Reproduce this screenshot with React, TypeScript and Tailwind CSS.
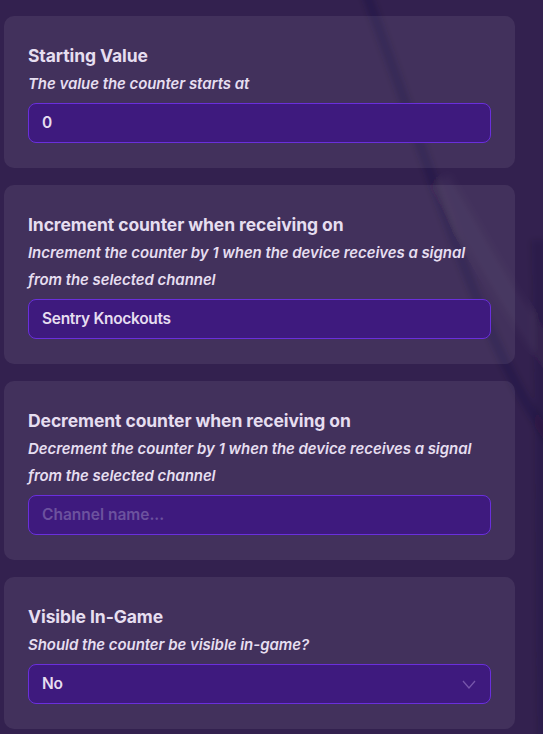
import React from 'react';

interface Field {
    title: string;
    description: string;
    value?: string;
    placeholder?: string;
    select?: boolean;
}

const fields: Field[] = [
    { title: 'Starting Value', description: 'The value the counter starts at', value: '0' },
    {
        title: 'Increment counter when receiving on',
        description: 'Increment the counter by 1 when the device receives a signal from the selected channel',
        value: 'Sentry Knockouts',
    },
    {
        title: 'Decrement counter when receiving on',
        description: 'Decrement the counter by 1 when the device receives a signal from the selected channel',
        placeholder: 'Channel name...',
    },
    { title: 'Visible In-Game', description: 'Should the counter be visible in-game?', value: 'No', select: true },
];

function FieldCard({ field }: { field: Field }) {
    return (
        <div className="rounded-[10px] bg-white/[0.075] pl-[24px] pr-[24px] pt-[26px] pb-[25px]">
            <div className="text-[17.5px] leading-[28px] font-bold tracking-[-0.005em] text-[#e6def0]">{field.title}</div>
            <div className="text-[15px] leading-[27px] italic font-semibold tracking-[-0.004em] text-[#e6def0] pr-[10px]">
                {field.description}
            </div>
            <div className="mt-[6px] h-[40px] rounded-[8px] border border-[#6a2fdc] bg-[#3e1a7e] flex items-center justify-between pl-[13px] pr-[14px]">
                {field.value ? (
                    <span className="text-[15.5px] font-semibold tracking-[-0.02em] text-[#e6def0]">{field.value}</span>
                ) : (
                    <span className="text-[15.5px] font-semibold text-[#6c529e]">{field.placeholder}</span>
                )}
                {field.select && (
                    <svg width="14" height="9" viewBox="0 0 14 9" fill="none">
                        <polyline points="1,1 7,8 13,1" stroke="#7656aa" strokeWidth="1.3" />
                    </svg>
                )}
            </div>
        </div>
    );
}

export default function App() {
    return (
        <div className="relative min-h-screen overflow-hidden bg-[#33214f]" style={{ fontFamily: 'Inter, "Noto Sans", sans-serif' }}>
            {/* background streaks */}
            <svg className="absolute inset-0 pointer-events-none" width="543" height="734" viewBox="0 0 543 734">
                <defs>
                    <filter id="soft" x="-20%" y="-20%" width="140%" height="140%">
                        <feGaussianBlur stdDeviation="3" />
                    </filter>
                </defs>
                <g filter="url(#soft)">
                    <path d="M 365 -10 C 398 80, 428 170, 462 260 S 520 400, 570 470" stroke="rgba(25,10,45,0.22)" strokeWidth="10" fill="none" />
                    <path d="M 440 180 C 480 245, 505 300, 560 370" stroke="rgba(255,255,255,0.03)" strokeWidth="22" fill="none" />
                    <path d="M 538 240 C 545 400, 540 600, 545 740" stroke="rgba(20,8,40,0.15)" strokeWidth="14" fill="none" />
                </g>
            </svg>
            <div className="relative flex flex-col gap-[17px] pl-[4px] pr-[28px] pt-[16px] pb-[8px]">
                {fields.map((f) => (
                    <FieldCard key={f.title} field={f} />
                ))}
            </div>
        </div>
    );
}
